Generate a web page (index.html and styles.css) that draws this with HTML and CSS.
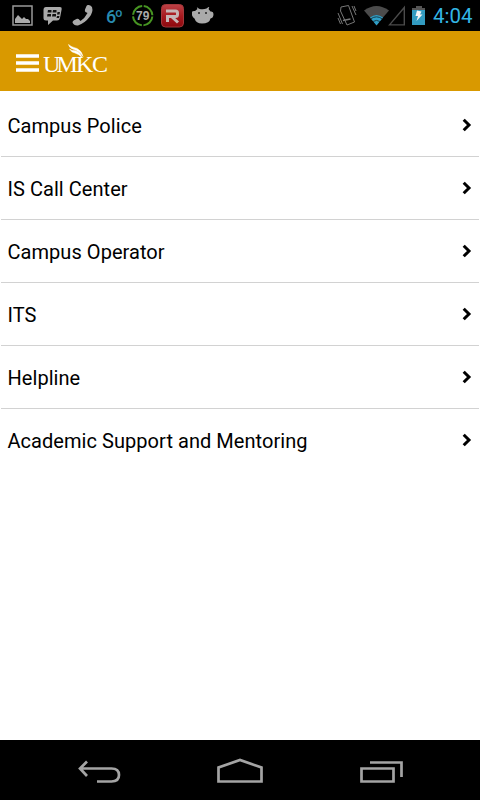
FILE: index.html
```html
<!DOCTYPE html>
<html lang="en">
<head>
<meta charset="utf-8">
<title>UMKC Contacts</title>
<link rel="stylesheet" href="styles.css">
</head>
<body>
<div class="status">
  <div class="group notices">
    <svg width="22" height="32" viewBox="12 0 22 32"><rect x="13" y="6" width="19" height="19" fill="none" stroke="#999" stroke-width="1.5"/><path d="M15 23V19L18 15L22 19L24 17L26 19H28L30 21V23Z" fill="#aaa"/></svg>
    <svg width="20" height="32" viewBox="43 0 20 32"><path d="M46 7H60Q62 7 61.700 9L60 18Q59.500 20.500 57 20.500H53L48 25V20.500H46Q43.500 20.500 43.500 18V10Q43.500 7 46 7Z" fill="#aaa"/><path d="M48 10h3.500v2.500h-4zM53 10h3.500v2.500h-4zM47.500 14h3.500v2.500h-4zM52.500 14h3.500v2.500h-4zM57.500 12h2.500l-.5 2.500h-2.500zM57 16h2.500l-.5 2h-2.500z" fill="#111"/></svg>
    <svg width="22" height="32" viewBox="72 0 22 32"><path d="M88 5Q90 4.500 92 7Q93.500 12 89.500 17Q85 23 78 25.500Q74 26 72.500 22.500Q72.500 21 74 20.200L77 18.800Q78.500 18.500 79.500 20L80.500 21Q85 18 87.500 13L85.500 12Q84.500 11 85 9.500L86.500 6Q87 5 88 5Z" fill="#aaa"/></svg>
    <span class="temp">6º</span>
    <svg width="22" height="32" viewBox="132 0 22 32"><circle cx="142.700" cy="15.700" r="9.700" fill="none" stroke="#479522" stroke-width="2" stroke-dasharray="13.600 1.636" stroke-dashoffset="-.8"/><text x="142.700" y="20" class="gauge">79</text></svg>
    <svg class="app" width="24" height="32" viewBox="161 0 24 32"><defs><linearGradient id="red" x1="0" x2="0" y1="0" y2="1"><stop offset="0" stop-color="#bd4246"/><stop offset=".5" stop-color="#a71b20"/><stop offset="1" stop-color="#8d080d"/></linearGradient></defs><rect x="161.500" y="4.500" width="22" height="22.500" rx="4" fill="url(#red)" stroke="#a3383b"/><path d="M166 11H175.500Q177.500 11 177.500 13V14.500Q177.500 16.500 175.500 16.500H167.500V22M172 17L178 22.500" fill="none" stroke="#c6b6b6" stroke-width="3"/></svg>
    <svg class="droid" width="23" height="32" viewBox="192 0 23 32"><path d="M191.500 13Q192 10.500 195 11L197.500 9L196.800 7.800L197.500 7.500L199 8.700Q203 10 206.500 8.500L208.500 7L209.300 7.500L208.500 9L210.500 11.500Q213.500 11 213.500 14Q213.500 18 210.500 18.500Q209.500 23.500 202 23.500Q196 23.500 194.500 18.500Q192 17 191.500 13Z" fill="#aaa"/><circle cx="199" cy="13" r="1" fill="#222"/><circle cx="206" cy="13" r="1" fill="#222"/></svg>
  </div>
  <div class="group system">
    <svg width="20" height="32" viewBox="337 0 20 32"><g fill="none" stroke="#777"><path d="M341 7L348.500 5.500L354.500 22L347 25L340.500 11Z"/><path d="M343 20.500L350.500 19" stroke-width="1.500"/><path d="M338 13L342.500 24M338 18L340.500 24M352 6L356 15M354 6L356 11" stroke-width="1"/></g></svg>
    <svg width="26" height="32" viewBox="364 0 26 32"><path d="M364 10.500Q376.500 1.500 389 10.500L376.500 25Z" fill="#4b4b4b"/><path d="M370 17.500Q376.500 12.500 383 17.500L376.500 25.500Z" fill="#2e9fc7"/><path d="M371 18.700Q376.500 15 382 18.700M373 21.500Q376.500 19.300 380 21.500" fill="none" stroke="#183c49"/></svg>
    <svg width="17" height="32" viewBox="388 0 17 32"><path d="M389.500 24.900L404.300 7.500V24.900Z" fill="none" stroke="#4b4b4b" stroke-width="1.400"/></svg>
    <svg width="14" height="32" viewBox="412 0 14 32"><path d="M412 8H416V6H422V8H425V13H412Z" fill="#555"/><path d="M412 10H425V25H412Z" fill="#329bc0"/><path d="M417 10.500L421.500 11.500L420 14.500H422.500L416.500 21L418 16H415.500Z" fill="#f5f5f5"/></svg>
    <span class="clock">4:04</span>
  </div>
</div>
<header class="bar">
  <svg class="menu" width="23" height="18" viewBox="0 0 23 18"><path d="M0 2H23M0 9H23M0 16H23" stroke="#fff" stroke-width="3.400"/></svg>
  <svg width="76" height="60" viewBox="42 31 76 60"><text x="43 56.500 76 92" y="72" class="logo">UMKC</text><path d="M68.500 44.500Q69 48 74 49.500Q79 51 83 56.500Q82 51 77 48.500Q71 47 68.500 44.500ZM69.500 49Q71 52 75 53Q79 54 82 57.500Q80 52 75 50.800Q71 50.500 69.500 49Z" fill="#fff" stroke="#fff" stroke-width=".5"/></svg>
</header>
<main class="list">
  <div class="row"><span>Campus Police</span><svg class="arrow" viewBox="0 0 10 14"><path d="M1.700 1.700L7 7L1.700 12.300"/></svg></div>
  <div class="row"><span>IS Call Center</span><svg class="arrow" viewBox="0 0 10 14"><path d="M1.700 1.700L7 7L1.700 12.300"/></svg></div>
  <div class="row"><span>Campus Operator</span><svg class="arrow" viewBox="0 0 10 14"><path d="M1.700 1.700L7 7L1.700 12.300"/></svg></div>
  <div class="row"><span>ITS</span><svg class="arrow" viewBox="0 0 10 14"><path d="M1.700 1.700L7 7L1.700 12.300"/></svg></div>
  <div class="row"><span>Helpline</span><svg class="arrow" viewBox="0 0 10 14"><path d="M1.700 1.700L7 7L1.700 12.300"/></svg></div>
  <div class="row"><span>Academic Support and Mentoring</span><svg class="arrow" viewBox="0 0 10 14"><path d="M1.700 1.700L7 7L1.700 12.300"/></svg></div>
</main>
<nav class="nav">
  <svg width="44" height="60" viewBox="79 740 44 60"><path d="M98 781.500H112.500Q120 781.500 120 775Q120 768.500 112.500 768.500H81M88 761.500L81 768.500L88 776"/></svg>
  <svg width="48" height="60" viewBox="217 740 48 60"><path d="M218.500 781.500V767.500L240 760L261.500 767.500V781.500Z"/></svg>
  <svg width="44" height="60" viewBox="360 740 44 60"><path d="M361.500 768.500H393.500V781.500H361.500ZM370 762.500H401.500V777"/></svg>
</nav>
</body>
</html>
```

FILE: styles.css
```css
* { box-sizing: border-box; }
body {
  margin: 0;
  width: 480px;
  height: 800px;
  display: flex;
  flex-direction: column;
  overflow: hidden;
  background: #fff;
  color: #000;
  font-family: Roboto, sans-serif;
}
svg { display: block; flex: none; }
.status {
  height: 31px;
  background: #000;
  display: flex;
  justify-content: space-between;
  padding: 0 8px 0 12px;
}
.group { display: flex; height: 31px; align-items: flex-start; }
.notices { gap: 9px; }
.app { margin-left: -2px; }
.droid { margin-left: -2px; }
.temp {
  width: 17px;
  margin-left: 3px;
  color: #288bb0;
  font-size: 18px;
  font-weight: 500;
  line-height: 33px;
  letter-spacing: -1.5px;
}
.gauge {
  fill: #aaa;
  font: bold 12px "Liberation Sans", sans-serif;
  text-anchor: middle;
}
.system svg:nth-child(2) { margin-left: 7px; }
.system svg:nth-child(3) { margin-left: -2px; }
.system svg:nth-child(4) { margin-left: 7px; }
.clock {
  width: 39px;
  margin-left: 7px;
  color: #33b5e5;
  font-size: 20.500px;
  line-height: 33px;
  white-space: nowrap;
}
.bar {
  height: 60px;
  background: #d99900;
  display: flex;
  align-items: center;
  padding-left: 16px;
  gap: 3px;
}
.menu { margin-top: 4px; }
.logo { fill: #fff; font: 24px "Liberation Serif", serif; }
.list { flex: 1; padding: 2.700px 1px 0; }
.row {
  height: 63.150px;
  display: flex;
  align-items: center;
  justify-content: space-between;
  padding: 1.600px 7px 0 6.500px;
  border-bottom: 1px solid #d2d2d2;
  font-size: 20px;
  letter-spacing: .05px;
}
.row:last-child { border-bottom: 0; padding-top: 0; }
.arrow {
  width: 10px;
  height: 14px;
  margin-bottom: 2px;
  fill: none;
  stroke: #000;
  stroke-width: 3;
}
.nav {
  height: 60px;
  background: #000;
  display: flex;
  justify-content: space-between;
  padding: 0 76px 0 78px;
}
.nav path { fill: none; stroke: #a4a4a4; stroke-width: 2.700; }
```
